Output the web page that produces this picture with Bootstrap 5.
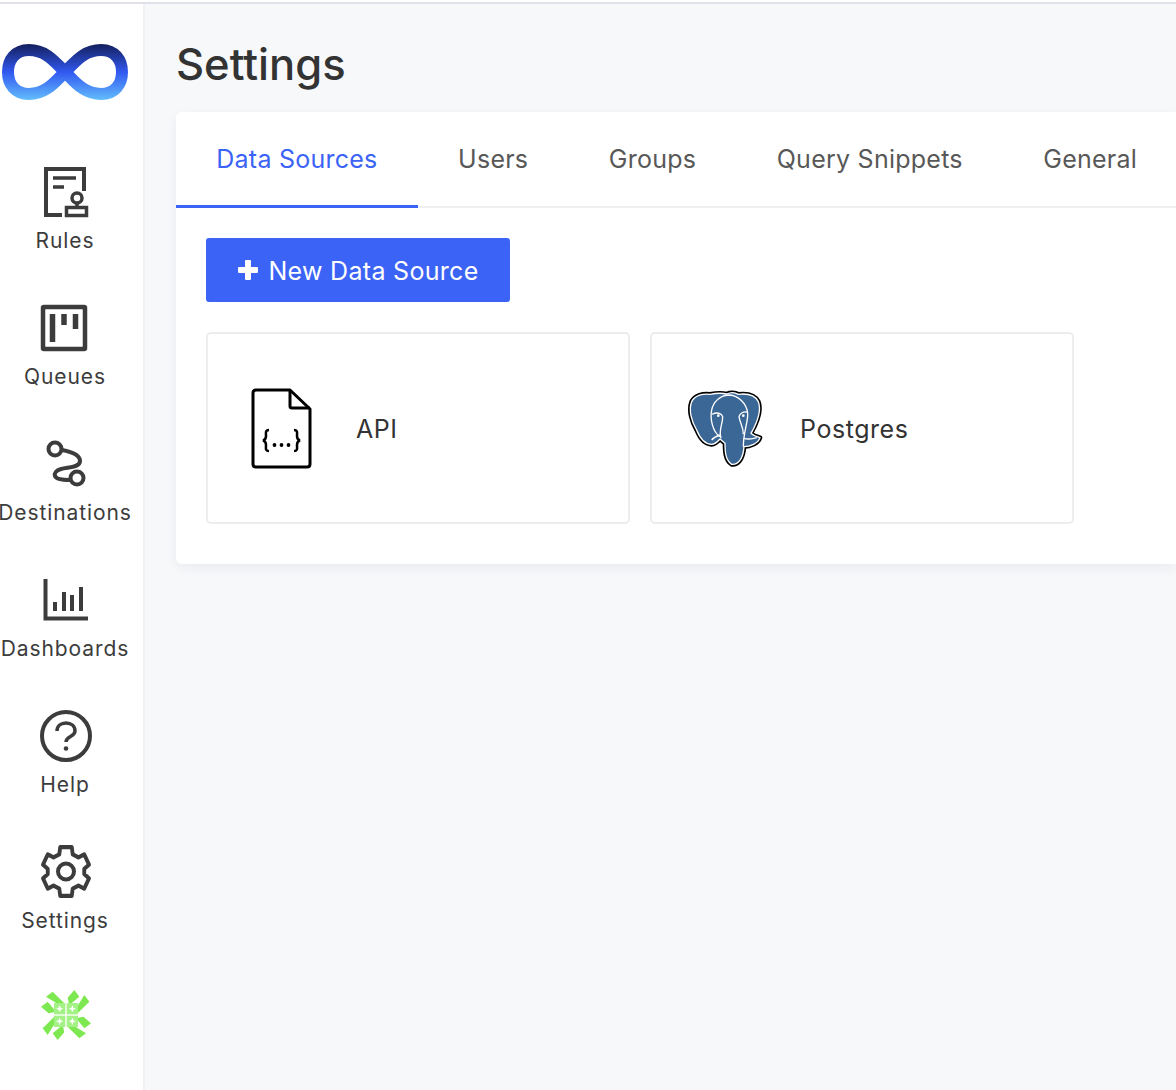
<!DOCTYPE html>
<html lang="en">
<head>
  <meta charset="UTF-8" />
  <meta name="viewport" content="width=device-width, initial-scale=1.0" />
  <title>Settings</title>
  <link href="https://cdn.jsdelivr.net/npm/bootstrap@5.3.3/dist/css/bootstrap.min.css" rel="stylesheet">
  <style>
    html { background-color: #fff; overflow: hidden; }
    body {
      font-family: Inter, "Liberation Sans", sans-serif;
      background-color: #f7f8fa;
      color: #333;
      margin-top: 2px;
      border-top: 2px solid #e0e0e6;
      height: 1088px;
      overflow: hidden;
    }
    .side-rail {
      width: 145px;
      flex: none;
      background-color: #fff;
      border-right: 2px solid #f0f1f4;
      padding-top: 38px;
      height: 1086px;
    }
    .rail-logo {
      width: 130px;
      height: 60px;
      margin-bottom: 59px;
      display: block;
    }
    .rail-item {
      width: 130px;
      height: 136px;
      color: #3c3c3c;
      font-size: 21px;
      letter-spacing: .9px;
      text-decoration: none;
    }
    .rail-item span { white-space: nowrap; line-height: 30px; }
    .rail-icon { width: 56px; height: 56px; display: block; margin-bottom: 9px; overflow: visible; }
    .page-main { padding: 0 0 0 31px; min-width: 0; flex: 1; }
    .page-title { font-size: 43.500px; font-weight: 500; line-height: 50px; margin: 35px 0 23px; color: #333; }
    .settings-panel {
      width: 1000px;
      height: 452px;
      background-color: #fff;
      border-radius: 6px 0 0 6px;
      box-shadow: 0 4px 12px rgba(30, 40, 70, .06);
    }
    .tab-strip { border-bottom: 2px solid #eff0f2; height: 96px; }
    .tab-link {
      display: block;
      height: 96px;
      padding: 0 40.250px;
      font-size: 25px;
      letter-spacing: .25px;
      line-height: 94px;
      color: #585858;
      text-decoration: none;
      white-space: nowrap;
    }
    .tab-link.is-active { color: #3b63f6; border-bottom: 3px solid #3b63f6; }
    .panel-body { padding: 30px; }
    .btn-new {
      width: 304px;
      height: 64px;
      background-color: #3b63f6;
      border: 0;
      border-radius: 3px;
      color: #fff;
      font-size: 25px;
      letter-spacing: .3px;
      white-space: nowrap;
      margin-bottom: 30px;
    }
    .btn-new:hover { background-color: #3b63f6; color: #fff; }
    .btn-plus { margin-right: 9px; }
    .btn-label { padding-top: 3px; }
    .source-row { gap: 20px; }
    .source-tile {
      width: 424px;
      height: 192px;
      border: 2px solid #ecedef;
      border-radius: 5px;
      font-size: 25px;
      letter-spacing: .55px;
      color: #333;
    }
    .tile-icon { width: 80px; height: 84px; flex: none; margin: 0 42px 0 26px; overflow: visible; }
    .tile-name { padding-top: 3px; }
  </style>
</head>
<body>

  <div class="d-flex">
    <!-- sidebar -->
    <nav class="side-rail">
      <svg class="rail-logo" viewBox="0 0 130 60">
        <defs>
          <linearGradient id="logoGrad" gradientUnits="userSpaceOnUse" x1="0" y1="2" x2="0" y2="58">
            <stop offset="0" stop-color="#141f5c"/>
            <stop offset=".5" stop-color="#3158f0"/>
            <stop offset="1" stop-color="#63bdfd"/>
          </linearGradient>
        </defs>
        <path d="M65 30C55 20 46 8 29 8C15 8 8 18 8 30C8 42 15 52 29 52C46 52 55 40 65 30C75 20 84 8 101 8C115 8 122 18 122 30C122 42 115 52 101 52C84 52 75 40 65 30Z" fill="none" stroke="url(#logoGrad)" stroke-width="12"/>
      </svg>

      <a href="#" class="rail-item d-flex flex-column align-items-center">
        <svg class="rail-icon" viewBox="0 0 56 56" fill="none" stroke="#3c3c3c" stroke-width="4">
          <path d="M25 54H9V8H47V30"/>
          <path d="M16 17H39M16 26H27" stroke-width="3.500"/>
          <circle cx="40" cy="37" r="5" stroke-width="3.500"/>
          <path d="M40 42V46" stroke-width="3.500"/>
          <rect x="29.500" y="46.500" width="20" height="8" stroke-width="3.500"/>
        </svg>
        <span>Rules</span>
      </a>
      <a href="#" class="rail-item d-flex flex-column align-items-center">
        <svg class="rail-icon" viewBox="0 0 56 56" fill="none" stroke="#3c3c3c">
          <rect x="6" y="10" width="42" height="42" rx="1" stroke-width="4.500"/>
          <path d="M15.500 17V45M27 17V28M38.500 17V32" stroke-width="5.500"/>
        </svg>
        <span>Queues</span>
      </a>
      <a href="#" class="rail-item d-flex flex-column align-items-center">
        <svg class="rail-icon" viewBox="0 0 56 56" fill="none" stroke="#3c3c3c" stroke-width="4">
          <circle cx="18" cy="16" r="6.500"/>
          <circle cx="40" cy="45" r="6.500"/>
          <path d="M25 17C36 19 43 22 43 28C43 35 31 34 24 36C19 37.500 17 40 18 43C19 46 26 47 33 47"/>
        </svg>
        <span>Destinations</span>
      </a>
      <a href="#" class="rail-item d-flex flex-column align-items-center">
        <svg class="rail-icon" viewBox="0 0 56 56" fill="none" stroke="#3c3c3c">
          <path d="M8.500 10V49.500H51" stroke-width="4"/>
          <path d="M18 33V42M27 23V42M35 26V42M44 18V42" stroke-width="4"/>
        </svg>
        <span>Dashboards</span>
      </a>
      <a href="#" class="rail-item d-flex flex-column align-items-center">
        <svg class="rail-icon" viewBox="0 0 56 56" fill="none" stroke="#3c3c3c" stroke-width="4">
          <circle cx="29" cy="31" r="24"/>
          <path d="M20 26C20 21 24 18 29 18C34 18 38 21 38 26C38 32 29 31 29 37" stroke-width="3.500"/>
          <circle cx="29" cy="43.500" r="2.300" fill="#3c3c3c" stroke="none"/>
        </svg>
        <span>Help</span>
      </a>
      <a href="#" class="rail-item d-flex flex-column align-items-center">
        <svg class="rail-icon" viewBox="0 0 56 56" fill="none" stroke="#3c3c3c" stroke-width="4" stroke-linejoin="round">
          <circle cx="29" cy="30.500" r="8"/>
          <path transform="translate(29 30.500) scale(.96 1.04) translate(-28 -28.500)" d="M22 5H34L35 12L41 15L47 12L52 22L47 26V31L52 35L47 45L41 42L35 45L34 52H22L21 45L15 42L9 45L4 35L9 31V26L4 22L9 12L15 15L21 12Z"/>
        </svg>
        <span>Settings</span>
      </a>
      <div class="rail-item d-flex justify-content-center">
        <svg class="rail-icon" viewBox="0 0 56 56">
          <defs>
            <g id="logoQuarter">
              <polygon points="30,35 50,20 85,55 62,55" fill="#7de84f"/>
              <polygon points="15,65 35,50 60,80 38,85" fill="#7de84f"/>
              <rect x="54" y="54" width="34" height="34" fill="#a4f286"/>
              <path d="M71 60L74 68L82 71L74 74L71 82L68 74L60 71L68 68Z" fill="#fff"/>
            </g>
          </defs>
          <g transform="translate(-1 8) scale(.3333)">
            <use href="#logoQuarter"/>
            <use href="#logoQuarter" transform="rotate(90 90 90)"/>
            <use href="#logoQuarter" transform="rotate(180 90 90)"/>
            <use href="#logoQuarter" transform="rotate(270 90 90)"/>
          </g>
        </svg>
      </div>
    </nav>

    <!-- content -->
    <main class="page-main">
      <h1 class="page-title">Settings</h1>
      <div class="settings-panel">
        <div class="tab-strip d-flex">
          <a href="#" class="tab-link is-active">Data Sources</a>
          <a href="#" class="tab-link">Users</a>
          <a href="#" class="tab-link">Groups</a>
          <a href="#" class="tab-link">Query Snippets</a>
          <a href="#" class="tab-link">General</a>
        </div>
        <div class="panel-body">
          <button class="btn btn-new d-flex align-items-center justify-content-center p-0">
            <svg class="btn-plus" width="22" height="22" viewBox="0 0 22 22" fill="#fff">
              <rect x="8" y="1" width="6" height="20" rx="1"/>
              <rect x="1" y="8" width="20" height="6" rx="1"/>
            </svg>
            <span class="btn-label">New Data Source</span>
          </button>
          <div class="d-flex source-row">
            <div class="source-tile d-flex align-items-center">
              <svg class="tile-icon" viewBox="0 0 80 84" fill="none" stroke="#000" stroke-width="3">
                <path d="M22 4H56L76 23V78C76 80 75 81 73 81H22C20 81 19 80 19 78V7C19 5 20 4 22 4Z" stroke-linejoin="round"/>
                <path d="M56 4V20C56 21.500 57 22 58 22H76"/>
                <path d="M35 44C31 44 32 47 32 50C32 53 31 54 29 54.500C31 55 32 56 32 59C32 62 31 65 35 65M60 44C64 44 63 47 63 50C63 53 64 54 66 54.500C64 55 63 56 63 59C63 62 64 65 60 65" stroke-width="2.500"/>
                <circle cx="40.500" cy="59" r="1.900" fill="#000" stroke="none"/>
                <circle cx="47.500" cy="59" r="1.900" fill="#000" stroke="none"/>
                <circle cx="54.500" cy="59" r="1.900" fill="#000" stroke="none"/>
              </svg>
              <span class="tile-name">API</span>
            </div>
            <div class="source-tile d-flex align-items-center">
              <svg class="tile-icon" viewBox="0 0 80 84">
                <g transform="translate(-3 -11) scale(.3333)" stroke-linejoin="round">
                  <path d="M105 58C85 55 60 60 50 80C40 105 50 140 65 165C75 190 90 208 110 208C120 208 128 200 135 192L150 205C150 225 150 255 170 268C190 270 205 250 207 215C225 215 250 205 255 188C245 185 235 182 228 175C245 145 260 105 250 80C240 60 215 55 190 58C180 52 165 52 155 57C135 52 120 55 105 58Z" fill="none" stroke="#000" stroke-width="14"/>
                  <path d="M105 58C85 55 60 60 50 80C40 105 50 140 65 165C75 190 90 208 110 208C120 208 128 200 135 192L150 205C150 225 150 255 170 268C190 270 205 250 207 215C225 215 250 205 255 188C245 185 235 182 228 175C245 145 260 105 250 80C240 60 215 55 190 58C180 52 165 52 155 57C135 52 120 55 105 58Z" fill="#3b6796" stroke="#fff" stroke-width="4"/>
                  <path d="M135 185C112 170 105 130 110 105C115 80 135 62 160 60C190 60 215 85 218 115C220 140 205 170 205 215" fill="none" stroke="#fff" stroke-width="4"/>
                  <path d="M112 118C125 110 140 115 143 125C143 150 130 165 138 190M218 112C205 108 195 115 192 125C195 145 205 155 205 178M110 195C118 185 128 182 135 180M207 190C220 195 235 190 245 188" fill="none" stroke="#fff" stroke-width="4"/>
                  <circle cx="130" cy="122" r="4" fill="#fff"/>
                  <circle cx="205" cy="122" r="4" fill="#fff"/>
                </g>
              </svg>
              <span class="tile-name">Postgres</span>
            </div>
          </div>
        </div>
      </div>
    </main>
  </div>

</body>
</html>
